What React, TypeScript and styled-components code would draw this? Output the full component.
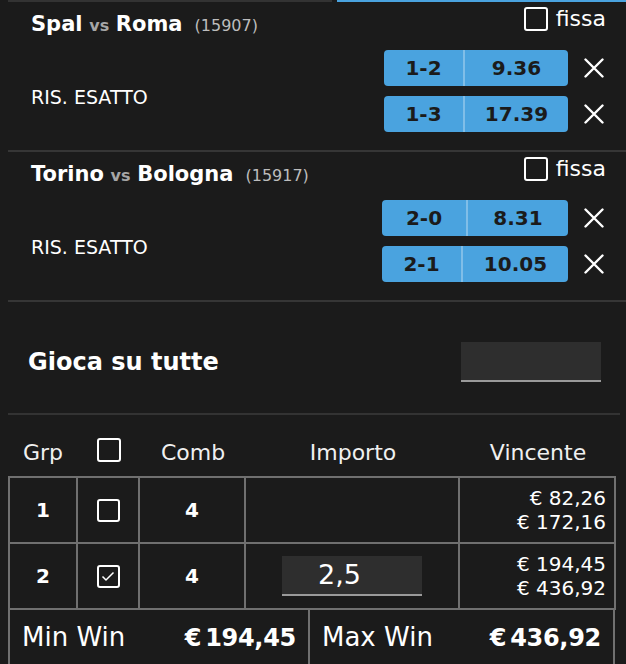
import React from "react";
import styled, { createGlobalStyle } from "styled-components";

const LINE = "#707070";
const BLUE = "#4aa3df";

const GlobalStyle = createGlobalStyle`
  html, body { margin: 0; padding: 0; background: #1b1b1b; overflow: hidden; }
  body { font-family: "DejaVu Sans", "Liberation Sans", sans-serif; color: #fff; }
  *, *::before, *::after { box-sizing: border-box; }
`;

const Page = styled.div`
  width: 626px;
  height: 664px;
  overflow: hidden;
  padding-left: 8px;
  background: #1b1b1b;
`;

const TabBar = styled.div`
  display: flex;
  gap: 5px;
  height: 2px;
`;

const Tab = styled.div<{ $active?: boolean; $w?: number }>`
  height: 2px;
  background: ${(p) => (p.$active ? BLUE : "#333")};
  flex: ${(p) => (p.$w ? `0 0 ${p.$w}px` : "1 1 auto")};
`;

const Event = styled.section`
  border-bottom: 2px solid #363636;
  padding: 5px 20px 18px 23px;
`;

const EventHeader = styled.div`
  display: flex;
  justify-content: space-between;
  align-items: flex-start;
  height: 28px;
`;

const Title = styled.div`
  padding-top: 5px;
  font-size: 21px;
  line-height: 24px;
  white-space: nowrap;
`;

const Team = styled.span`
  font-weight: 700;
`;

const Vs = styled.span`
  font-size: 16px;
  font-weight: 700;
  color: #a6a6a6;
`;

const Code = styled.span`
  margin-left: 12px;
  font-size: 16px;
  color: #bdbdbd;
`;

const FixLabel = styled.label`
  display: flex;
  align-items: center;
  gap: 8px;
  font-size: 22px;
  line-height: 24px;
`;

const Box = styled.span<{ $size?: number }>`
  width: ${(p) => p.$size ?? 24}px;
  height: ${(p) => p.$size ?? 24}px;
  border: 2px solid #fff;
  border-radius: 3px;
  display: inline-flex;
  align-items: center;
  justify-content: center;
  flex: none;
`;

const EventBody = styled.div`
  display: flex;
  justify-content: space-between;
  align-items: center;
  margin-top: 15px;
`;

const Market = styled.div`
  font-size: 19px;
  line-height: 24px;
  margin-top: 12px;
`;

const Picks = styled.div`
  display: flex;
  flex-direction: column;
  gap: 10px;
`;

const PickRow = styled.div`
  display: flex;
  align-items: center;
  gap: 14px;
`;

const Odd = styled.div<{ $w: number }>`
  display: flex;
  width: ${(p) => p.$w}px;
  height: 36px;
  background: ${BLUE};
  border-radius: 4px;
  color: #1b1b1b;
  font-weight: 700;
  font-size: 20px;
`;

const OddCell = styled.span<{ $w?: number }>`
  display: flex;
  align-items: center;
  justify-content: center;
  flex: ${(p) => (p.$w ? `0 0 ${p.$w}px` : "1 1 auto")};
  & + & {
    border-left: 2px solid rgba(255, 255, 255, 0.3);
  }
`;

const Remove = styled.button`
  width: 24px;
  height: 24px;
  padding: 0;
  border: none;
  background: none;
  color: #fff;
  display: flex;
  align-items: center;
  justify-content: center;
`;

const AllRow = styled.div`
  display: flex;
  align-items: center;
  justify-content: space-between;
  margin-right: 6px;
  padding: 40px 19px 31px 20px;
  border-bottom: 2px solid #333;
`;

const AllLabel = styled.div`
  font-size: 24px;
  font-weight: 700;
`;

const Field = styled.div<{ $w: number }>`
  width: ${(p) => p.$w}px;
  height: 40px;
  background: #2e2e2e;
  border-bottom: 2px solid #9a9a9a;
  display: flex;
  align-items: center;
  padding-left: 36px;
  font-size: 27px;
  color: #fff;
`;

const HeadRow = styled.div`
  display: grid;
  grid-template-columns: 70px 62px 106px 214px 156px;
  padding: 23px 0 11px;
  align-items: start;
`;

const HeadCell = styled.div`
  display: flex;
  justify-content: center;
  padding-top: 3px;
  font-size: 22px;
  line-height: 24px;
  color: #f0f0f0;
`;

const HeadBoxCell = styled.div`
  display: flex;
  justify-content: center;
`;

const Grid = styled.div`
  display: grid;
  grid-template-columns: 68px 62px 106px 214px 156px;
  width: 608px;
  border-left: 2px solid ${LINE};
  border-top: 2px solid ${LINE};
`;

const Cell = styled.div<{ $align?: "center" | "right" }>`
  height: 66px;
  border-right: 2px solid ${LINE};
  border-bottom: 2px solid ${LINE};
  display: flex;
  flex-direction: column;
  justify-content: center;
  align-items: ${(p) => (p.$align === "right" ? "flex-end" : "center")};
  padding-right: ${(p) => (p.$align === "right" ? "8px" : "0")};
  font-size: 20px;
  line-height: 24px;
`;

const Num = styled.span`
  font-weight: 700;
  font-size: 20px;
`;

const Footer = styled.div`
  display: grid;
  grid-template-columns: 300px 305px;
  width: 607px;
  border-left: 2px solid ${LINE};
`;

const FooterCell = styled.div`
  display: flex;
  justify-content: space-between;
  align-items: baseline;
  border-right: 2px solid ${LINE};
  padding: 12px 12px 20px;
  font-size: 26px;
  line-height: 30px;
`;

const Amount = styled.span`
  font-weight: 700;
  font-size: 24px;
  word-spacing: -4px;
  letter-spacing: -0.3px;
`;

const XIcon = () => (
  <svg width="20" height="20" viewBox="0 0 20 20" fill="none">
    <path d="M1.5 1.5 L18.5 18.5 M18.5 1.5 L1.5 18.5" stroke="#fff" strokeWidth="2.4" strokeLinecap="round" />
  </svg>
);

const Check = () => (
  <svg width="14" height="11" viewBox="0 0 14 11" fill="none">
    <path d="M1.5 5.5 L5 9 L12.5 1.5" stroke="#fff" strokeWidth="1.5" strokeLinejoin="round" />
  </svg>
);

type Pick = { score: string; odd: string; left: number };
type Match = { home: string; away: string; code: string; width: number; picks: Pick[] };

const matches: Match[] = [
  {
    home: "Spal",
    away: "Roma",
    code: "15907",
    width: 184,
    picks: [
      { score: "1-2", odd: "9.36", left: 79 },
      { score: "1-3", odd: "17.39", left: 79 },
    ],
  },
  {
    home: "Torino",
    away: "Bologna",
    code: "15917",
    width: 186,
    picks: [
      { score: "2-0", odd: "8.31", left: 84 },
      { score: "2-1", odd: "10.05", left: 79 },
    ],
  },
];

const groups = [
  { grp: "1", checked: false, comb: "4", stake: "", win: ["€ 82,26", "€ 172,16"] },
  { grp: "2", checked: true, comb: "4", stake: "2,5", win: ["€ 194,45", "€ 436,92"] },
];

export default function App() {
  return (
    <Page>
      <GlobalStyle />
      <TabBar>
        <Tab $w={324} />
        <Tab $active />
      </TabBar>

      {matches.map((m) => (
        <Event key={m.code}>
          <EventHeader>
            <Title>
              <Team>{m.home}</Team> <Vs>vs</Vs> <Team>{m.away}</Team>
              <Code>({m.code})</Code>
            </Title>
            <FixLabel>
              <Box />
              fissa
            </FixLabel>
          </EventHeader>
          <EventBody>
            <Market>RIS. ESATTO</Market>
            <Picks>
              {m.picks.map((p) => (
                <PickRow key={p.score}>
                  <Odd $w={m.width}>
                    <OddCell $w={p.left}>{p.score}</OddCell>
                    <OddCell>{p.odd}</OddCell>
                  </Odd>
                  <Remove aria-label="rimuovi">
                    <XIcon />
                  </Remove>
                </PickRow>
              ))}
            </Picks>
          </EventBody>
        </Event>
      ))}

      <AllRow>
        <AllLabel>Gioca su tutte</AllLabel>
        <Field $w={140} />
      </AllRow>

      <HeadRow>
        <HeadCell>Grp</HeadCell>
        <HeadBoxCell>
          <Box />
        </HeadBoxCell>
        <HeadCell>Comb</HeadCell>
        <HeadCell>Importo</HeadCell>
        <HeadCell>Vincente</HeadCell>
      </HeadRow>

      <Grid>
        {groups.map((g) => (
          <React.Fragment key={g.grp}>
            <Cell>
              <Num>{g.grp}</Num>
            </Cell>
            <Cell>
              <Box $size={23}>{g.checked && <Check />}</Box>
            </Cell>
            <Cell>
              <Num>{g.comb}</Num>
            </Cell>
            <Cell>{g.stake && <Field $w={140}>{g.stake}</Field>}</Cell>
            <Cell $align="right">
              {g.win.map((w) => (
                <span key={w}>{w}</span>
              ))}
            </Cell>
          </React.Fragment>
        ))}
      </Grid>

      <Footer>
        <FooterCell>
          <span>Min Win</span>
          <Amount>€ 194,45</Amount>
        </FooterCell>
        <FooterCell>
          <span>Max Win</span>
          <Amount>€ 436,92</Amount>
        </FooterCell>
      </Footer>
    </Page>
  );
}
